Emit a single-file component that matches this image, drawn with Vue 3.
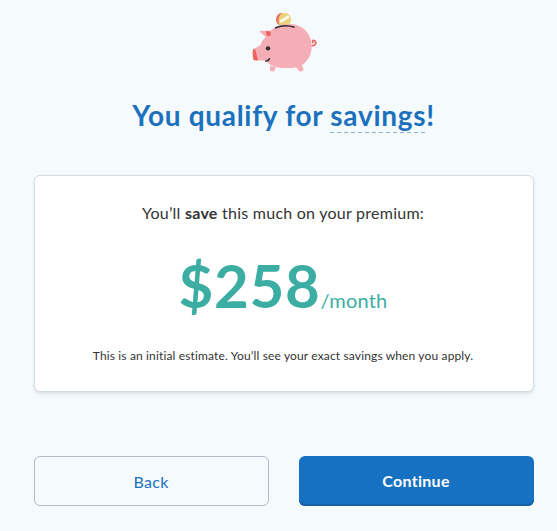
<script setup>
const amount = 258
</script>

<template>
  <main class="page">
    <svg class="pig" viewBox="0 0 270 225" aria-hidden="true">
      <path d="M216 122C227 123 231 112 224 107C219 104 215 109 219 113" fill="none" stroke="#e8665f" stroke-width="5" stroke-linecap="round" />
      <circle cx="133" cy="44" r="20.500" fill="#ecd37e" />
      <path d="M128 23.500C104 24 103 56 119 61C113 46 115 32 128 23.500Z" fill="#e9735f" />
      <path d="M121 50L147 34" stroke="#fffdf3" stroke-width="8" />
      <g fill="#f5adb6">
        <path d="M90 182L108 186L103 197Q99 202 93 198Q88 195 90 190Z" />
        <path d="M168 187L184 179L190 190Q192 197 184 199Q178 201 175 195Z" />
        <path d="M77 96L61 82Q57 77 65 77L90 77Q120 56 150 57C189 58 215 87 215 123C215 164 187 189 151 189C118 191 90 184 77 167L52 166L40 132L61 121Q64 108 77 96Z" />
      </g>
      <path d="M78 79Q91 76 93 87Q92 95 85 94Q77 91 78 79Z" fill="#e8665f" />
      <path d="M39 132L46 134L54 164L52 167L41 166Q36 149 39 132Z" fill="#e8665f" />
      <circle cx="84" cy="130" r="6.500" fill="#2f2c30" />
      <path d="M76 169Q86 168 89 160" fill="none" stroke="#2f2c30" stroke-width="4.500" />
      <path d="M105 69Q134 57 164 67" fill="none" stroke="#2f2c30" stroke-width="4.500" />
    </svg>

    <h1 class="title">You qualify for <span class="term">savings</span>!</h1>

    <section class="card">
      <p class="lead">You’ll <strong>save</strong> this much on your premium:</p>
      <p class="price"><span class="amount">${{ amount }}</span><span class="period">/month</span></p>
      <p class="note">This is an initial estimate. You’ll see your exact savings when you apply.</p>
    </section>

    <div class="actions">
      <button class="btn back" type="button">Back</button>
      <button class="btn next" type="button">Continue</button>
    </div>
  </main>
</template>

<style>
body {
  background: #f5fafd;
}
</style>

<style scoped>
.page {
  box-sizing: border-box;
  width: 557px;
  height: 531px;
  padding: 5px 23px 0 34px;
  display: flex;
  flex-direction: column;
  overflow: hidden;
  background: #f5fafd;
  font-family: Lato, sans-serif;
  font-variant-ligatures: none;
  color: #333;
  white-space: nowrap;
}
.pig {
  width: 90px;
  height: 75px;
  flex: none;
  align-self: center;
  margin-left: 2px;
}
.title {
  margin: 15px 0 0;
  height: 41px;
  padding-right: 1px;
  line-height: 40px;
  text-align: center;
  font-size: 28px;
  font-weight: 700;
  letter-spacing: 0.7px;
  color: #1c71bd;
}
.term {
  display: inline-block;
  height: 38px;
  background: repeating-linear-gradient(90deg, #8fb0c8 0 4px, transparent 4px 7px) 0 100% / 100% 1px no-repeat;
}
.card {
  box-sizing: border-box;
  width: 500px;
  height: 217px;
  margin-top: 39px;
  padding: 26px 2px 0 0;
  border: 1px solid #d3dde6;
  border-radius: 6px;
  background: #fff;
  box-shadow: 0 2px 3px rgba(60, 90, 115, 0.14);
  text-align: center;
}
.card p {
  margin: 0;
}
.card .lead {
  font-size: 16px;
  line-height: 22px;
  letter-spacing: 0.25px;
}
.card .price {
  display: flex;
  justify-content: center;
  align-items: baseline;
  height: 72px;
  margin-top: 25px;
  color: #3cada3;
}
.amount {
  font-size: 60px;
  line-height: 72px;
  font-weight: 700;
  letter-spacing: 0.7px;
}
.period {
  font-size: 20px;
  letter-spacing: 0.2px;
}
.note {
  padding-top: 27px;
  font-size: 12px;
  line-height: 16px;
  letter-spacing: 0.145px;
}
.actions {
  display: grid;
  grid-template-columns: 235px 235px;
  gap: 30px;
  margin-top: 64px;
}
.btn {
  box-sizing: border-box;
  height: 50px;
  padding: 0 1px 1px 0;
  border-radius: 6px;
  font: 400 16px/22px Lato, sans-serif;
  letter-spacing: 0.3px;
}
.back {
  padding-top: 2px;
  border: 1px solid #b0bdc6;
  background: transparent;
  color: #1c71bd;
}
.next {
  border: 0;
  background: #1771c2;
  box-shadow: inset 0 -2px 0 #1762a5;
  color: #fff;
  font-weight: 700;
}
</style>
